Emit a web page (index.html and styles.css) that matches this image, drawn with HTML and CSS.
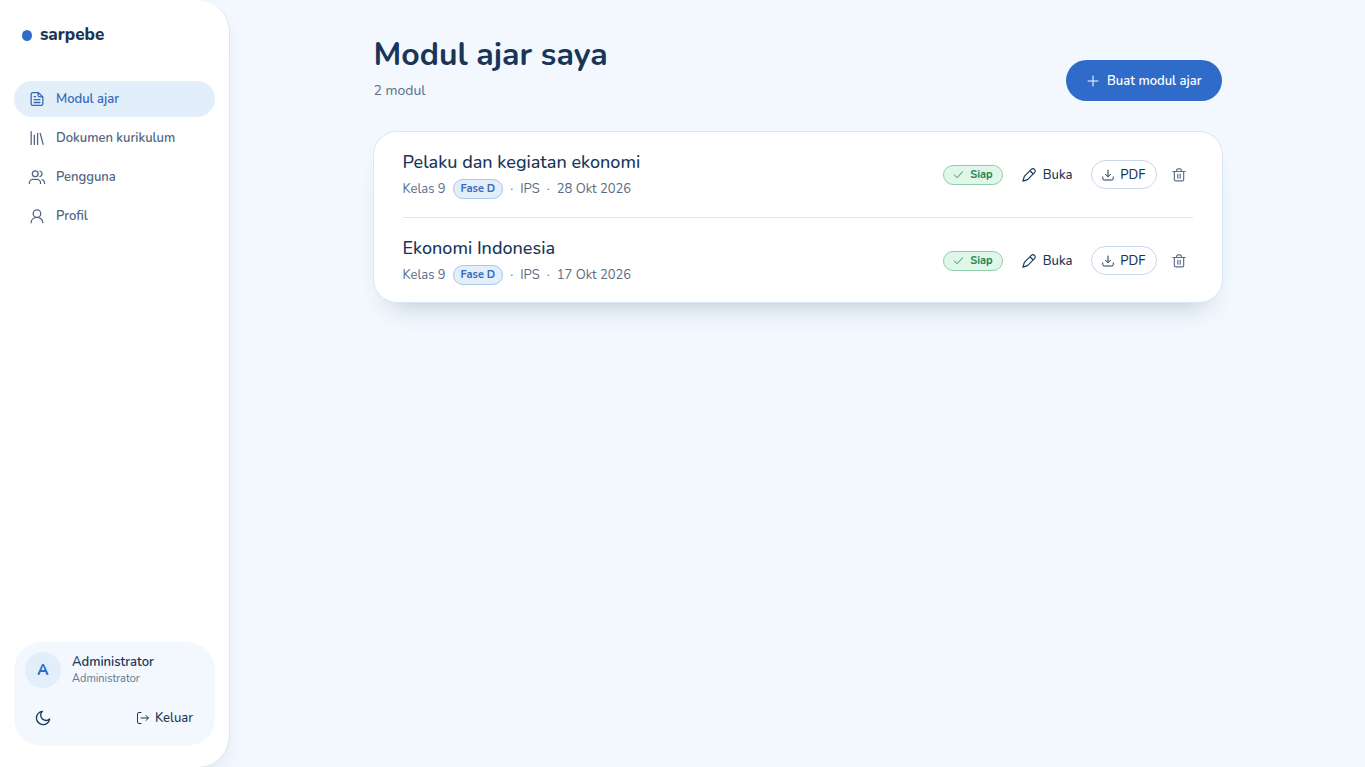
FILE: index.html
```html
<!DOCTYPE html>
<html lang="id">
<head>
    <meta charset="UTF-8">
    <meta name="viewport" content="width=device-width, initial-scale=1.0">
    <title>Modul ajar saya - sarpebe</title>
    <link rel="stylesheet" href="styles.css">
</head>
<body>
    <!-- Shared icons -->
    <svg class="sprite" aria-hidden="true">
        <symbol id="i-pencil" viewBox="0 0 24 24"><path d="M1.500 22.500l2.500-8L16 2.500a3.700 3.700 0 0 1 5.500 5.500L9.500 20zM15 6l3 3"/></symbol>
        <symbol id="i-download" viewBox="0 0 24 24"><path d="M12 2v13M7 10.500l5 5 5-5M1.500 16v3a3 3 0 0 0 3 3h15a3 3 0 0 0 3-3v-3"/></symbol>
        <symbol id="i-trash" viewBox="0 0 24 24"><path d="M1.500 6h21M8 6V4a2.500 2.500 0 0 1 2.500-2.500h3A2.500 2.500 0 0 1 16 4v2M4 6v13.500A2.500 2.500 0 0 0 6.500 22h11a2.500 2.500 0 0 0 2.500-2.500V6M10 10.500v7M14 10.500v7"/></symbol>
        <symbol id="i-check" viewBox="0 0 24 24"><path d="M3 13l6 6L21 6"/></symbol>
    </svg>

    <aside class="sidebar">
        <a class="brand" href="#"><span class="brand-dot"></span>sarpebe</a>

        <nav class="nav">
            <a class="nav-item active" href="#">
                <svg class="icon" viewBox="0 0 24 24"><path d="M14.500 1H5a3 3 0 0 0-3 3v16a3 3 0 0 0 3 3h14a3 3 0 0 0 3-3V8.500zM14 1v5a2.500 2.500 0 0 0 2.500 2.500H22M7 8h2.500M7 13h10M7 18h10"/></svg>
                Modul ajar
            </a>
            <a class="nav-item" href="#">
                <svg class="icon" viewBox="0 0 24 24"><path d="M2 1v22M7.500 7v16M13 4v19M17.500 4l5 19"/></svg>
                Dokumen kurikulum
            </a>
            <a class="nav-item" href="#">
                <svg class="icon" viewBox="0 0 24 24"><circle cx="9" cy="6.500" r="5"/><path d="M-1 23v-1a6 6 0 0 1 6-6h7a6 6 0 0 1 6 6v1M17 1.700a5 5 0 0 1 0 9.600M25 23v-1a6 6 0 0 0-4-5.600"/></svg>
                Pengguna
            </a>
            <a class="nav-item" href="#">
                <svg class="icon" viewBox="0 0 24 24"><circle cx="12" cy="8" r="6.500"/><path d="M2 23.500c0-5 4-9 10-9s10 4 10 9"/></svg>
                Profil
            </a>
        </nav>

        <div class="user-card">
            <div class="user">
                <span class="avatar">A</span>
                <div>
                    <div class="user-name">Administrator</div>
                    <div class="user-role">Administrator</div>
                </div>
            </div>
            <div class="user-actions">
                <button class="theme-btn" type="button" aria-label="Mode gelap">
                    <svg class="icon" viewBox="0 0 24 24"><path d="M11 2A10 10 0 1 0 22 13.500 7 7 0 0 1 11 2z"/></svg>
                </button>
                <button class="logout-btn" type="button">
                    <svg class="icon" viewBox="0 0 24 24"><path d="M8 1H4a3 3 0 0 0-3 3v16a3 3 0 0 0 3 3h4M8 12h15M18 7l5 5-5 5"/></svg>
                    Keluar
                </button>
            </div>
        </div>
    </aside>

    <main class="main">
        <div class="container">
            <header class="page-header">
                <div>
                    <h1>Modul ajar saya</h1>
                    <p>2 modul</p>
                </div>
                <button class="create-btn" type="button">
                    <svg class="icon" viewBox="0 0 24 24"><path d="M12 2v20M2 12h20"/></svg>
                    Buat modul ajar
                </button>
            </header>

            <ul class="modules">
                <li class="module">
                    <div class="module-info">
                        <h2>Pelaku dan kegiatan ekonomi</h2>
                        <div class="meta">
                            <span>Kelas 9</span>
                            <span class="badge phase">Fase D</span>
                            <span>·</span>
                            <span>IPS</span>
                            <span>·</span>
                            <span>28 Okt 2026</span>
                        </div>
                    </div>
                    <div class="module-actions">
                        <span class="badge ready"><svg class="icon"><use href="#i-check"/></svg>Siap</span>
                        <a class="open-btn" href="#"><svg class="icon"><use href="#i-pencil"/></svg>Buka</a>
                        <button class="pdf-btn" type="button"><svg class="icon"><use href="#i-download"/></svg>PDF</button>
                        <button class="delete-btn" type="button" aria-label="Hapus"><svg class="icon"><use href="#i-trash"/></svg></button>
                    </div>
                </li>
                <li class="module">
                    <div class="module-info">
                        <h2>Ekonomi Indonesia</h2>
                        <div class="meta">
                            <span>Kelas 9</span>
                            <span class="badge phase">Fase D</span>
                            <span>·</span>
                            <span>IPS</span>
                            <span>·</span>
                            <span>17 Okt 2026</span>
                        </div>
                    </div>
                    <div class="module-actions">
                        <span class="badge ready"><svg class="icon"><use href="#i-check"/></svg>Siap</span>
                        <a class="open-btn" href="#"><svg class="icon"><use href="#i-pencil"/></svg>Buka</a>
                        <button class="pdf-btn" type="button"><svg class="icon"><use href="#i-download"/></svg>PDF</button>
                        <button class="delete-btn" type="button" aria-label="Hapus"><svg class="icon"><use href="#i-trash"/></svg></button>
                    </div>
                </li>
            </ul>
        </div>
    </main>
</body>
</html>
```
FILE: styles.css
```css
/* General Styles */
* {
    box-sizing: border-box;
}

body {
    margin: 0;
    min-height: 100vh;
    display: flex;
    font-family: 'Nunito', 'Lato', sans-serif;
    font-size: 13px;
    line-height: 20px;
    color: #1b3557;
    background: #f2f8fe;
}

a {
    color: inherit;
    text-decoration: none;
}

button {
    font: inherit;
    color: inherit;
    background: none;
    border: none;
    padding: 0;
    cursor: pointer;
}

.sprite {
    display: none;
}

.icon {
    width: 14px;
    height: 14px;
    flex-shrink: 0;
    fill: none;
    stroke: currentColor;
    stroke-width: 2;
    stroke-linecap: round;
    stroke-linejoin: round;
    overflow: visible;
}

/* Sidebar */
.sidebar {
    width: 230px;
    flex-shrink: 0;
    display: flex;
    flex-direction: column;
    padding: 22px 14px 21px;
    background: #fff;
    border-right: 1px solid #dbe6f3;
    border-radius: 0 32px 32px 0;
    box-shadow: 0 12px 24px -12px rgba(27, 53, 87, 0.2);
}

.brand {
    display: flex;
    align-items: center;
    gap: 8px;
    padding: 0 8px;
    margin-bottom: 33px;
    font-size: 17px;
    line-height: 26px;
    font-weight: 800;
}

.brand-dot {
    width: 10px;
    height: 11px;
    border-radius: 50%;
    background: #2f6bc9;
}

.nav {
    display: flex;
    flex-direction: column;
    gap: 3px;
}

.nav-item {
    display: flex;
    align-items: center;
    gap: 12px;
    padding: 8px 16px;
    border-radius: 18px;
    font-weight: 600;
    color: #526583;
}

.nav-item .icon {
    stroke-width: 2.2;
}

.nav-item.active {
    background: #e3eefb;
    color: #3568b8;
}

.user-card {
    margin-top: auto;
    padding: 10px 11px 13px;
    border-radius: 28px;
    background: #f2f8fe;
}

.user {
    display: flex;
    align-items: center;
    gap: 11px;
}

.avatar {
    width: 36px;
    height: 36px;
    border-radius: 50%;
    background: #e3eefb;
    color: #2f6bc9;
    font-size: 15px;
    line-height: 36px;
    font-weight: 800;
    text-align: center;
}

.user-name {
    line-height: 18px;
    font-weight: 600;
}

.user-role {
    font-size: 11px;
    line-height: 16px;
    color: #66758f;
}

.user-actions {
    display: flex;
    justify-content: space-between;
    align-items: center;
    margin-top: 15px;
    padding: 0 11px 0 10px;
}

.theme-btn,
.logout-btn {
    height: 30px;
    display: flex;
    align-items: center;
    gap: 6px;
    font-weight: 500;
}

.theme-btn .icon {
    width: 16px;
    height: 16px;
}

.logout-btn .icon {
    width: 12px;
    height: 12px;
}

/* Main content */
.main {
    flex: 1;
    padding: 32px;
}

.container {
    max-width: 850px;
    margin: 0 auto;
}

.page-header {
    display: flex;
    justify-content: space-between;
    align-items: flex-end;
    margin: 0 1px 30px;
}

h1 {
    margin: 0;
    font-size: 32px;
    line-height: 46px;
    font-weight: 700;
}

.page-header p {
    margin: 2px 0 0;
    font-size: 14px;
    line-height: 21px;
    color: #5b6c88;
}

.create-btn {
    height: 41px;
    display: flex;
    align-items: center;
    gap: 8px;
    padding: 0 20px 0 21px;
    border-radius: 21px;
    background: #2f6bc9;
    color: #fff;
    font-weight: 600;
}

.create-btn .icon {
    width: 12px;
    height: 12px;
}

/* Module list */
.modules {
    list-style: none;
    margin: 0;
    padding: 0 29px;
    background: #fff;
    border: 1px solid #dbe6f3;
    border-radius: 24px;
    box-shadow: 0 18px 28px -18px rgba(27, 53, 87, 0.3);
}

.module {
    display: flex;
    justify-content: space-between;
    align-items: center;
    padding: 18px 0;
}

.module + .module {
    padding-bottom: 17px;
    border-top: 1px solid #dfe6ef;
}

h2 {
    margin: 0 0 4px;
    font-size: 18px;
    line-height: 25px;
    font-weight: 500;
}

.meta {
    display: flex;
    align-items: center;
    gap: 7px;
    color: #5b6c88;
}

.badge {
    height: 20px;
    display: flex;
    align-items: center;
    border: 1px solid;
    border-radius: 10px;
    padding: 0 7px;
    font-size: 11px;
    line-height: 18px;
    font-weight: 700;
}

.badge.phase {
    background: #e3eefb;
    border-color: #aec6e8;
    color: #3568b8;
}

.badge.ready {
    gap: 6px;
    padding: 0 9px;
    background: #dff6e9;
    border-color: #8fcead;
    color: #238551;
}

.badge .icon {
    width: 11px;
    height: 11px;
}

.module-actions {
    display: flex;
    align-items: center;
    font-weight: 500;
}

.open-btn {
    display: flex;
    align-items: center;
    gap: 7px;
    margin: 0 19px;
}

.pdf-btn {
    height: 29px;
    display: flex;
    align-items: center;
    gap: 6px;
    padding: 0 10px;
    border: 1px solid #c8d7eb;
    border-radius: 15px;
}

.pdf-btn .icon {
    width: 12px;
    height: 12px;
}

.delete-btn {
    display: flex;
    padding: 7px;
    margin-left: 8px;
    color: #5b6c88;
}

@media (max-width: 800px) {
    body {
        flex-direction: column;
    }

    .sidebar {
        width: auto;
        border-radius: 0 0 32px 32px;
    }

    .module {
        flex-wrap: wrap;
        gap: 12px;
    }
}
```
